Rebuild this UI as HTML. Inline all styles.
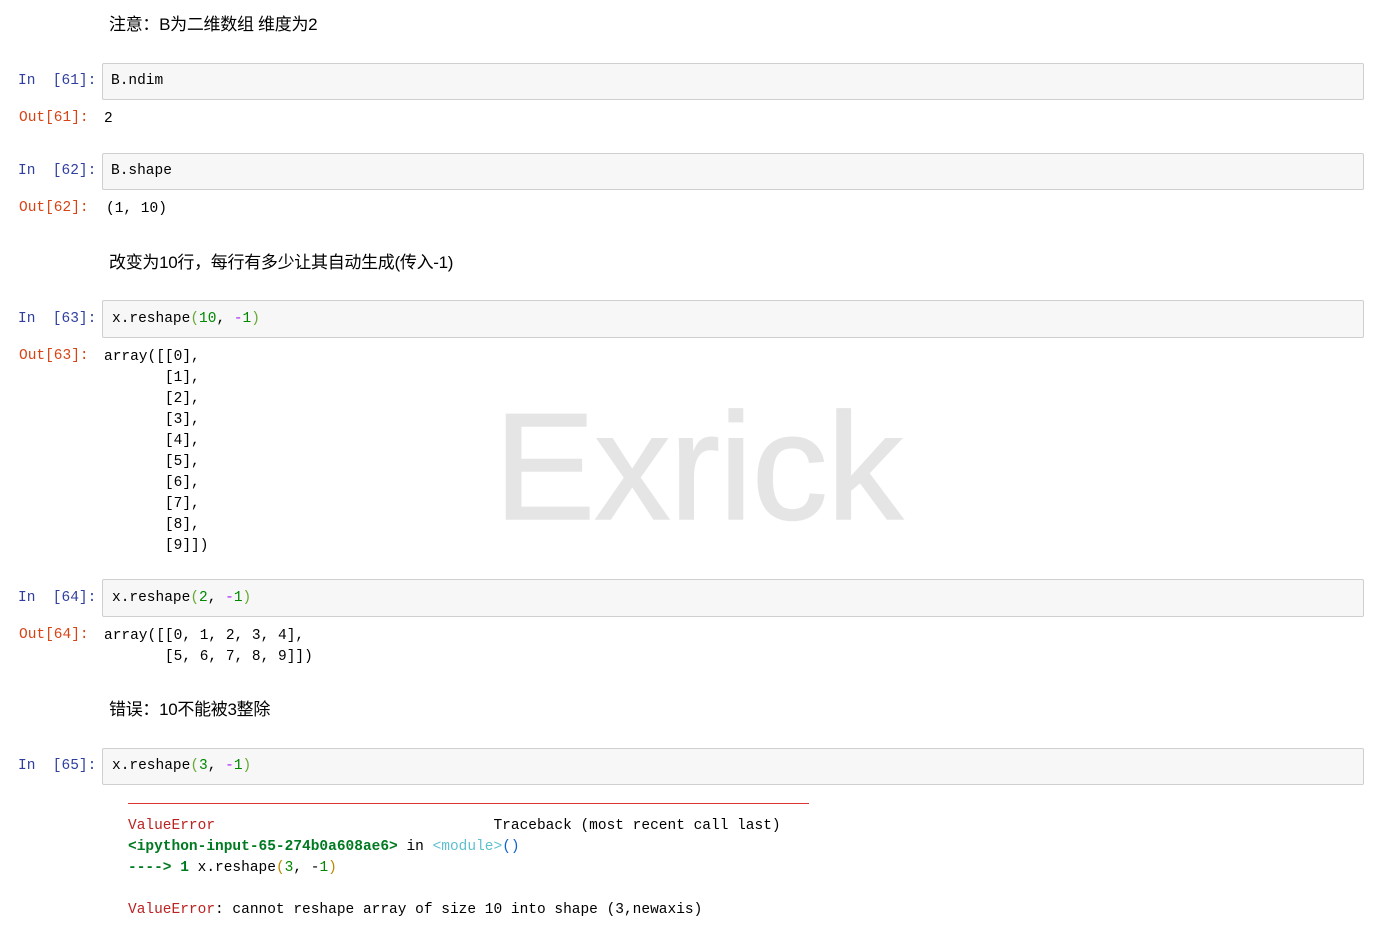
<!DOCTYPE html>
<html><head><meta charset="utf-8"><style>
body{margin:0;width:1374px;height:934px;background:#fff;position:relative;overflow:hidden;font-family:"Liberation Mono","Noto Sans CJK SC",monospace;font-size:14.5px;color:#000}
.a{position:absolute;white-space:pre;line-height:21px}
.md{font-family:"Liberation Sans","Noto Sans CJK SC",sans-serif;font-size:17px;color:#000;letter-spacing:-0.3px}
.in{color:#303f9f}.out{color:#d84315}
.box{position:absolute;left:102px;width:1260px;background:#f7f7f7;border:1px solid #cfcfcf;border-radius:2px;height:35px}
.n{color:#080}.p{color:#a2f}.g{color:#6a3}
.r{color:#b22}.gr{color:#007a20;font-weight:bold}.c{color:#60c0d0}.b{color:#1060d0}
.wm{position:absolute;left:494px;top:380px;font-family:"Liberation Sans",sans-serif;font-size:152px;color:#e5e5e5;letter-spacing:-1px;-webkit-text-stroke:1.5px #e5e5e5}
</style></head><body>
<div class="wm">Exrick</div>
<div class="a md" style="left:109px;top:14px">注意：B为二维数组 维度为2</div>

<div class="a in" style="left:18px;top:71px">In  [61]:</div>
<div class="box" style="top:63px"></div>
<div class="a" style="left:111px;top:71px">B.ndim</div>
<div class="a out" style="left:19px;top:108px">Out[61]:</div>
<div class="a" style="left:104px;top:109px">2</div>

<div class="a in" style="left:18px;top:161px">In  [62]:</div>
<div class="box" style="top:153px"></div>
<div class="a" style="left:111px;top:161px">B.shape</div>
<div class="a out" style="left:19px;top:198px">Out[62]:</div>
<div class="a" style="left:106px;top:199px">(1, 10)</div>

<div class="a md" style="left:109px;top:252px">改变为10行，每行有多少让其自动生成(传入-1)</div>

<div class="a in" style="left:18px;top:309px">In  [63]:</div>
<div class="box" style="top:300px;height:36px"></div>
<div class="a" style="left:112px;top:309px">x.reshape<span class="g">(</span><span class="n">10</span>, <span class="p">-</span><span class="n">1</span><span class="g">)</span></div>
<div class="a out" style="left:19px;top:346px">Out[63]:</div>
<div class="a" style="left:104px;top:347px">array([[0],
       [1],
       [2],
       [3],
       [4],
       [5],
       [6],
       [7],
       [8],
       [9]])</div>

<div class="a in" style="left:18px;top:588px">In  [64]:</div>
<div class="box" style="top:579px;height:36px"></div>
<div class="a" style="left:112px;top:588px">x.reshape<span class="g">(</span><span class="n">2</span>, <span class="p">-</span><span class="n">1</span><span class="g">)</span></div>
<div class="a out" style="left:19px;top:625px">Out[64]:</div>
<div class="a" style="left:104px;top:626px">array([[0, 1, 2, 3, 4],
       [5, 6, 7, 8, 9]])</div>

<div class="a md" style="left:109px;top:699px">错误：10不能被3整除</div>

<div class="a in" style="left:18px;top:756px">In  [65]:</div>
<div class="box" style="top:748px;height:35px"></div>
<div class="a" style="left:112px;top:756px">x.reshape<span class="g">(</span><span class="n">3</span>, <span class="p">-</span><span class="n">1</span><span class="g">)</span></div>
<div style="position:absolute;left:128px;top:803px;width:681px;height:1px;background:#d33"></div>
<div class="a" style="left:128px;top:816px"><span class="r">ValueError</span>                                Traceback (most recent call last)
<span class="gr">&lt;ipython-input-65-274b0a608ae6&gt;</span> in <span class="c">&lt;module&gt;</span><span class="b">()</span>
<span class="gr">----&gt; 1</span> x.reshape<span style="color:#b80">(</span><span class="n">3</span>, -<span class="n">1</span><span style="color:#b80">)</span>

<span class="r">ValueError</span>: cannot reshape array of size 10 into shape (3,newaxis)</div>
</body></html>
